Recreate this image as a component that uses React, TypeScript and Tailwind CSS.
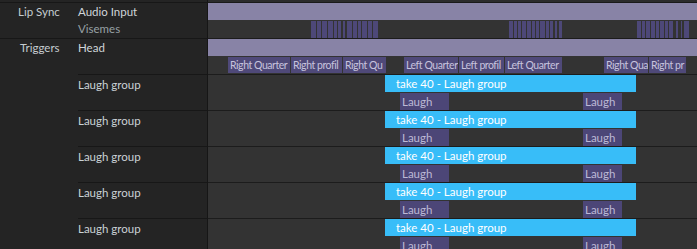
import React from 'react';

type Span = [number, number];

// timeline origin is x=208 in the window
const T0 = 208;

const visemes: Span[] = [
  [311, 316], [317, 321], [322, 327], [328, 333], [334, 337], [338, 341], [343, 345],
  [347, 352], [353, 357], [358, 361], [362, 367], [368, 372], [373, 378],
  [509, 513], [514, 517], [518, 521], [522, 526], [527, 531], [532, 535], [536, 539],
  [540, 545], [546, 549], [550, 553], [555, 557], [559, 562],
  [637, 641], [642, 645], [646, 650], [651, 655], [656, 659], [660, 664], [665, 668],
  [669, 673], [676, 678], [681, 682], [684, 689],
];

const headClips: { x: [number, number]; label: string }[] = [
  { x: [228, 290], label: 'Right Quarter' },
  { x: [291, 342], label: 'Right profil' },
  { x: [343, 386], label: 'Right Qu' },
  { x: [404, 458], label: 'Left Quarter' },
  { x: [459, 504], label: 'Left profil' },
  { x: [505, 562], label: 'Left Quarter' },
  { x: [604, 648], label: 'Right Qua' },
  { x: [649, 686], label: 'Right pr' },
];

const pos = (a: number, b: number) => ({ left: a - T0, width: b - a });

const LaughRow = () => (
  <div className="flex h-[36px]">
    <div className="w-[207px] shrink-0 flex flex-col">
      <div className="flex-1 pl-[78px] pt-[1px] text-[11.5px] text-[#cad2d6]">Laugh group</div>
      <div className="ml-[78px] h-px bg-[#171717]" />
    </div>
    <div className="w-px bg-[#161616]" />
    <div className="flex-1 flex flex-col bg-[#333333]">
      <div className="relative flex-1">
        <div
          className="absolute top-0 h-[17px] bg-[#38bdf8] pl-[11px] text-[11.5px] leading-[17px] text-white"
          style={pos(385, 636)}
        >
          take 40 - Laugh group
        </div>
        <div className="absolute top-[18px] h-[17px] bg-[#4c4677] pl-[2px] text-[11.5px] leading-[17px] text-[#bdb9d6]" style={pos(400, 449)}>
          Laugh
        </div>
        <div className="absolute top-[18px] h-[17px] bg-[#4c4677] pl-[2px] text-[11.5px] leading-[17px] text-[#bdb9d6]" style={pos(583, 622)}>
          Laugh
        </div>
      </div>
      <div className="h-px bg-[#1c1c1c]" />
    </div>
  </div>
);

export default function App() {
  return (
    <div className="w-[697px] h-[249px] overflow-hidden bg-[#242424] font-['Lato','Open_Sans',sans-serif]">
      {/* top strip */}
      <div className="flex h-[3px]">
        <div className="w-[207px] flex flex-col">
          <div className="flex-1" />
          <div className="h-px bg-[#171717]" />
        </div>
        <div className="w-px bg-[#161616]" />
        <div className="flex-1 flex flex-col bg-[#2c2c2c]">
          <div className="flex-1" />
          <div className="h-px bg-[#1a1a1a]" />
        </div>
      </div>

      {/* Lip Sync group */}
      <div className="flex h-[36px]">
        <div className="w-[207px] flex flex-col">
          <div className="flex flex-1 text-[11.5px]">
            <div className="w-[78px] pl-[18px] leading-[17px] text-[#c5ccd0]">Lip Sync</div>
            <div className="flex flex-col">
              <div className="h-[17px] leading-[17px] text-[#d0d6da]">Audio Input</div>
              <div className="h-[18px] leading-[18px] text-[#97a1a5]">Visemes</div>
            </div>
          </div>
          <div className="h-px bg-[#171717]" />
        </div>
        <div className="w-px bg-[#161616]" />
        <div className="flex-1 flex flex-col bg-[#333333]">
          <div className="h-[17px] bg-[#8883a6]" />
          <div className="relative h-[18px]">
            {visemes.map(([a, b], i) => (
              <div key={i} className="absolute top-[1px] bottom-0 bg-[#4d4878]" style={pos(a, b)} />
            ))}
          </div>
          <div className="h-px bg-[#1c1c1c]" />
        </div>
      </div>

      {/* Triggers / Head */}
      <div className="flex h-[36px]">
        <div className="w-[207px] flex flex-col">
          <div className="flex flex-1 text-[11.5px]">
            <div className="w-[78px] pl-[20px] leading-[17px] text-[#c5ccd0]">Triggers</div>
            <div className="leading-[17px] text-[#d0d6da]">Head</div>
          </div>
          <div className="ml-[78px] h-px bg-[#171717]" />
        </div>
        <div className="w-px bg-[#161616]" />
        <div className="flex-1 flex flex-col bg-[#333333]">
          <div className="h-[17px] bg-[#8883a6]" />
          <div className="relative h-[18px]">
            {headClips.map((c, i) => (
              <div
                key={i}
                className="absolute top-[1px] h-[16px] overflow-hidden whitespace-nowrap bg-[#4f4979] pl-[2px] text-[10.5px] tracking-[-0.45px] leading-[16px] text-[#c7c3de]"
                style={pos(c.x[0], c.x[1])}
              >
                {c.label}
              </div>
            ))}
          </div>
          <div className="h-px bg-[#1c1c1c]" />
        </div>
      </div>

      <LaughRow />
      <LaughRow />
      <LaughRow />
      <LaughRow />
      <LaughRow />
    </div>
  );
}
